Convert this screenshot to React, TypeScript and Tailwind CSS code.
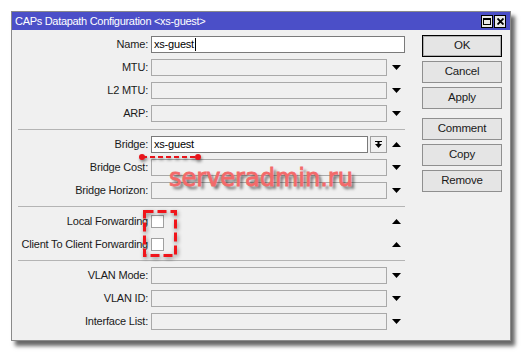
import React from 'react';

type Row = {
  label: string;
  kind: 'text' | 'drop' | 'up' | 'bridge' | 'check';
  value?: string;
  caret?: boolean;
};

const SECTIONS: Row[][] = [
  [
    { label: 'Name:', kind: 'text', value: 'xs-guest', caret: true },
    { label: 'MTU:', kind: 'drop' },
    { label: 'L2 MTU:', kind: 'drop' },
    { label: 'ARP:', kind: 'drop' },
  ],
  [
    { label: 'Bridge:', kind: 'bridge', value: 'xs-guest' },
    { label: 'Bridge Cost:', kind: 'drop' },
    { label: 'Bridge Horizon:', kind: 'drop' },
  ],
  [
    { label: 'Local Forwarding', kind: 'check' },
    { label: 'Client To Client Forwarding', kind: 'check' },
  ],
  [
    { label: 'VLAN Mode:', kind: 'drop' },
    { label: 'VLAN ID:', kind: 'drop' },
    { label: 'Interface List:', kind: 'drop' },
  ],
];

const BUTTONS = [['OK', 'Cancel', 'Apply'], ['Comment', 'Copy', 'Remove']];

function Tri({ up }: { up?: boolean }) {
  return (
    <svg width="9" height="5" viewBox="0 0 9 5" className="block">
      {up ? <polygon points="0,5 9,5 4.5,0" fill="#000" /> : <polygon points="0,0 9,0 4.5,5" fill="#000" />}
    </svg>
  );
}

function Field({ row }: { row: Row }) {
  if (row.kind === 'check') {
    return (
      <div className="flex h-[17px] flex-1 items-center">
        <div className="h-[13px] w-[13px] border border-[#a0a0a0] bg-white" />
        <div className="flex-1" />
        <div className="flex w-[18px] justify-center">
          <Tri up />
        </div>
      </div>
    );
  }
  if (row.kind === 'text') {
    return (
      <div className="flex h-[17px] flex-1 items-center border border-[#7a7a7a] bg-white pl-[2px] text-black">
        {row.value}
        {row.caret && <span className="ml-px inline-block h-[13px] w-px bg-black" />}
      </div>
    );
  }
  if (row.kind === 'bridge') {
    return (
      <div className="flex h-[17px] flex-1 items-center">
        <div className="flex h-full flex-1 items-center border border-[#7a7a7a] bg-white pl-[2px] text-black">
          {row.value}
        </div>
        <div className="ml-[2px] flex h-full w-[17px] items-center justify-center border border-[#a0a0a0] bg-[#f0f0f0]">
          <svg width="7" height="7" viewBox="0 0 7 7" className="block">
            <rect x="0" y="0" width="7" height="1" fill="#000" />
            <rect x="2.5" y="1" width="2" height="2" fill="#000" />
            <polygon points="0,3 7,3 3.5,7" fill="#000" />
          </svg>
        </div>
        <div className="flex w-[18px] justify-center">
          <Tri up />
        </div>
      </div>
    );
  }
  return (
    <div className="flex h-[17px] flex-1 items-center">
      <div className="h-full flex-1 border border-[#a9a9a9] bg-[#f0f0f0]" />
      <div className="flex w-[18px] justify-center">
        <Tri up={row.kind === 'up'} />
      </div>
    </div>
  );
}

export default function App() {
  return (
    <div className="relative h-[353px] w-[523px] overflow-hidden bg-white pl-[11px] pt-[11px] font-['Liberation_Sans',Arial,sans-serif] text-[11px] tracking-[-0.2px] text-[#1a1a1a]">
      {/* window */}
      <div className="flex h-[330px] w-[500px] flex-col border border-[#8a8a8a] bg-[#f0f0f0] shadow-[4px_5px_4px_rgba(0,0,0,0.6)]">
        <div className="flex h-[18px] items-center bg-[#4b4fc8] pl-[3px] pr-[4px] text-[11px] tracking-[-0.3px] text-white">
          <span className="flex-1">CAPs Datapath Configuration &lt;xs-guest&gt;</span>
          <div className="flex gap-px">
            <div className="flex h-[13px] w-[12px] items-center justify-center border border-black bg-[#e8e8e8]">
              <svg width="8" height="7" viewBox="0 0 8 7" className="block">
                <rect x="0.5" y="0.5" width="7" height="6" fill="none" stroke="#000" />
                <rect x="0" y="0" width="8" height="2" fill="#000" />
              </svg>
            </div>
            <div className="flex h-[13px] w-[12px] items-center justify-center border border-black bg-[#e8e8e8]">
              <svg width="7" height="7" viewBox="0 0 7 7" className="block">
                <path d="M0.5 0.5 L6.5 6.5 M6.5 0.5 L0.5 6.5" stroke="#000" strokeWidth="1.8" />
              </svg>
            </div>
          </div>
        </div>

        <div className="flex flex-1">
          {/* form */}
          <div className="flex w-[393px] flex-col pl-[6px] pt-[6px]">
            {SECTIONS.map((rows, si) => (
              <React.Fragment key={si}>
                {si > 0 && <div className="mb-[6px] mt-[7px] h-px bg-[#b4b4b4]" />}
                <div className="flex flex-col gap-[6px]">
                  {rows.map((row) => (
                    <div key={row.label} className="flex items-center">
                      <div className="w-[130px] shrink-0 text-right">{row.label}</div>
                      <div className="ml-[3px] flex flex-1">
                        <Field row={row} />
                      </div>
                    </div>
                  ))}
                </div>
              </React.Fragment>
            ))}
          </div>

          {/* buttons */}
          <div className="ml-[17px] flex flex-col gap-[9px] pt-[5px]">
            {BUTTONS.map((group, gi) => (
              <div key={gi} className="flex flex-col gap-[4px]">
                {group.map((b) => (
                  <div
                    key={b}
                    className={
                      b === 'OK'
                        ? 'flex h-[22px] w-[80px] items-center justify-center border border-black bg-[#e5e5e5] text-[11.5px] shadow-[inset_0_0_0_1px_#adadad]'
                        : 'flex h-[22px] w-[80px] items-center justify-center border border-[#8f8f8f] bg-[#e5e5e5] text-[11.5px]'
                    }
                  >
                    {b}
                  </div>
                ))}
              </div>
            ))}
          </div>
        </div>
      </div>

      {/* annotations */}
      <svg className="absolute left-[136px] top-[151px]" width="70" height="14" viewBox="0 0 70 14">
        <g style={{ filter: 'drop-shadow(1px 2px 1.5px rgba(0,0,0,0.45))' }}>
          <line x1="6" y1="6" x2="62" y2="6" stroke="#e8141a" strokeWidth="2" strokeDasharray="5 3" />
          <circle cx="6" cy="6" r="3" fill="#e8141a" />
          <circle cx="62" cy="6" r="3" fill="#e8141a" />
        </g>
      </svg>
      <svg className="absolute left-[139px] top-[206px]" width="44" height="56" viewBox="0 0 44 56">
        <rect
          x="5.5"
          y="5.5"
          width="31"
          height="44"
          fill="none"
          stroke="#f0141a"
          strokeWidth="3"
          strokeDasharray="9 4"
          style={{ filter: 'drop-shadow(1px 2px 2px rgba(0,0,0,0.45))' }}
        />
      </svg>
      <div className="absolute left-[169px] top-[166px] font-['DejaVu_Sans',sans-serif] text-[24px] leading-[24px] tracking-normal text-[#f36a6a] [-webkit-text-stroke:0.8px_#f36a6a] [text-shadow:3px_3px_3px_rgba(0,0,0,0.6)]">
        serveradmin.ru
      </div>
    </div>
  );
}
